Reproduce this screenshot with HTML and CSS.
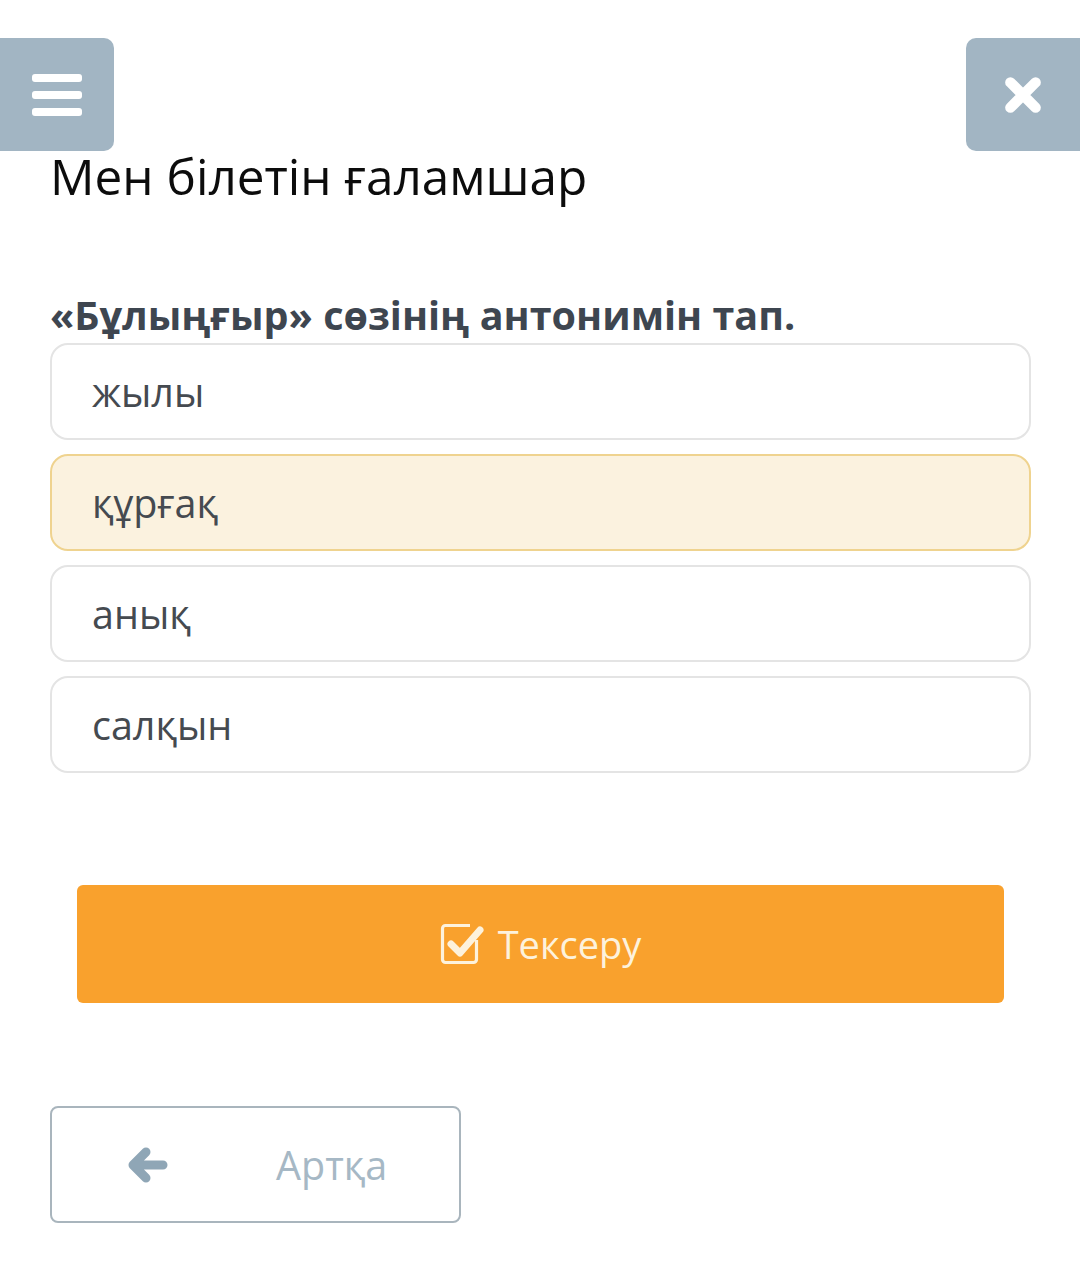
FILE: index.html
```html
<!DOCTYPE html>
<html lang="kk">
<head>
    <meta charset="UTF-8">
    <meta name="viewport" content="width=device-width, initial-scale=1.0">
    <title>Мен білетін ғаламшар</title>
    <link rel="stylesheet" href="styles.css">
</head>
<body>
    <header class="topbar">
        <button class="tool-btn menu-btn" aria-label="Мәзір">
            <span></span><span></span><span></span>
        </button>
        <button class="tool-btn close-btn" aria-label="Жабу">
            <svg viewBox="0 0 40 40" width="42" height="42">
                <path d="M8 8 L32 32 M32 8 L8 32" stroke="#fff" stroke-width="10" stroke-linecap="round"/>
            </svg>
        </button>
    </header>

    <main class="quiz">
        <h1 class="quiz-title">Мен білетін ғаламшар</h1>

        <h2 class="question">«Бұлыңғыр» сөзінің антонимін тап.</h2>

        <ul class="answers">
            <li class="answer">жылы</li>
            <li class="answer selected">құрғақ</li>
            <li class="answer">анық</li>
            <li class="answer">салқын</li>
        </ul>

        <button class="check-btn">
            <svg class="check-icon" viewBox="0 0 44 42" width="44" height="42">
                <path d="M36.5 17 V36.5 a3 3 0 0 1 -3 3 H5.5 a3 3 0 0 1 -3 -3 V5.5 a3 3 0 0 1 3 -3 H30" fill="none" stroke="currentColor" stroke-width="3.2"/>
                <path d="M11 21 L20 30 L40 7" fill="none" stroke="currentColor" stroke-width="7" stroke-linecap="round" stroke-linejoin="round"/>
            </svg>
            <span>Тексеру</span>
        </button>

        <button class="back-btn">
            <svg class="back-icon" viewBox="0 0 40 36" width="40" height="36">
                <path d="M18 5 L5 18 L18 31 M6 18 H35" fill="none" stroke="currentColor" stroke-width="9" stroke-linecap="round" stroke-linejoin="round"/>
            </svg>
            <span>Артқа</span>
        </button>
    </main>
</body>
</html>
```

FILE: styles.css
```css
body {
    margin: 0;
    background: #fff;
    font-family: "Open Sans", "Noto Sans", sans-serif;
}

.topbar {
    display: flex;
    justify-content: space-between;
    margin-top: 38px;
}

.tool-btn {
    width: 114px;
    height: 113px;
    border: none;
    background: #a2b5c3;
    border-radius: 10px;
    padding: 0;
    display: flex;
    align-items: center;
    justify-content: center;
}

.menu-btn {
    flex-direction: column;
    gap: 9px;
    border-top-left-radius: 0;
    border-bottom-left-radius: 0;
}

.menu-btn span {
    display: block;
    width: 50px;
    height: 8px;
    background: #fff;
    border-radius: 3px;
}

.close-btn {
    border-top-right-radius: 0;
    border-bottom-right-radius: 0;
}

.quiz {
    padding: 0 49px 0 50px;
}

.quiz-title {
    margin: 1px 0 0;
    font-size: 49.5px;
    font-weight: 400;
    line-height: 48px;
    color: #0c0c0c;
}

.question {
    margin: 93px 0 6px;
    font-size: 39.5px;
    font-weight: 700;
    line-height: 44px;
    color: #3e4650;
}

.answers {
    list-style: none;
    margin: 0;
    padding: 0;
    display: flex;
    flex-direction: column;
    gap: 14px;
}

.answer {
    height: 93px;
    display: flex;
    align-items: center;
    padding-left: 40px;
    border: 2px solid #e4e4e4;
    border-radius: 18px;
    font-size: 39.5px;
    color: #454a50;
}

.answer.selected {
    background: #fbf2df;
    border-color: #efd38f;
}

.check-btn {
    display: flex;
    align-items: center;
    justify-content: center;
    gap: 14px;
    width: 927px;
    height: 118px;
    margin: 112px 0 0 27px;
    border: none;
    border-radius: 6px;
    background: #f9a12d;
    color: #fdf2dc;
    font-family: inherit;
    font-size: 38px;
}

.back-btn {
    display: flex;
    align-items: center;
    width: 411px;
    height: 117px;
    margin-top: 103px;
    padding: 0 0 0 76px;
    border: 2px solid #a9b5bd;
    border-radius: 8px;
    background: #fff;
    color: #a6b8c5;
    font-family: inherit;
    font-size: 39.5px;
}

.back-icon {
    color: #8fa6b6;
    margin-right: 108px;
}
```
